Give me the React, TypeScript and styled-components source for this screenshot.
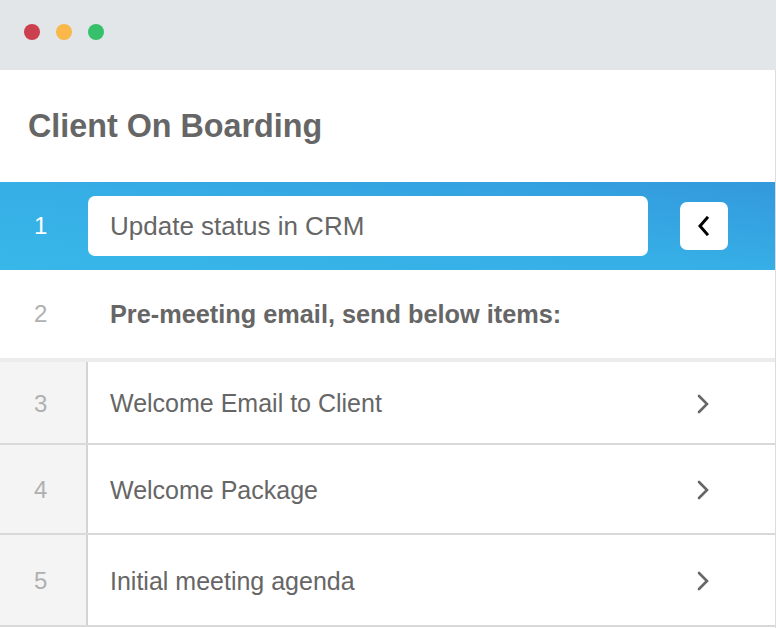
import React from "react";
import styled, { createGlobalStyle } from "styled-components";

const Global = createGlobalStyle`
  html, body { margin: 0; padding: 0; background: #ffffff; }
  body { font-family: "Liberation Sans", Arial, Helvetica, sans-serif; }
  * { box-sizing: border-box; }
`;

const Window = styled.div`
  width: 776px;
  height: 628px;
  overflow: hidden;
  display: flex;
  flex-direction: column;
  background: #ffffff;
`;

const TitleBar = styled.div`
  height: 70px;
  flex: none;
  background: #e3e6e8;
  display: flex;
  align-items: center;
  padding-left: 24px;
  padding-bottom: 6px;
  gap: 16px;
`;

const Dot = styled.span<{ $color: string }>`
  width: 16px;
  height: 16px;
  border-radius: 50%;
  background: ${(p) => p.$color};
`;

const Body = styled.div`
  flex: 1;
  display: flex;
  flex-direction: column;
  border-right: 1px solid #dcdcdc;
`;

const Header = styled.div`
  height: 112px;
  display: flex;
  align-items: center;
  padding-left: 28px;
`;

const Title = styled.h1`
  margin: 0;
  font-size: 32.3px;
  font-weight: 700;
  color: #666666;
`;

const ActiveRow = styled.div`
  height: 88px;
  display: flex;
  align-items: center;
  background: linear-gradient(to right top, #38b7e9 0%, #36aee6 50%, #3399dc 100%);
`;

const Num = styled.div<{ $light?: boolean }>`
  width: 88px;
  flex: none;
  padding-left: 34px;
  font-size: 24px;
  color: ${(p) => (p.$light ? "#ffffff" : "#b0b0b0")};
`;

const InputBox = styled.div`
  width: 560px;
  height: 60px;
  border-radius: 7px;
  background: #ffffff;
  display: flex;
  align-items: center;
  padding-left: 22px;
  font-size: 26px;
  color: #666666;
`;

const IconButton = styled.button`
  width: 48px;
  height: 48px;
  margin-left: 32px;
  border: none;
  border-radius: 7px;
  background: #ffffff;
  display: flex;
  align-items: center;
  justify-content: center;
  padding: 0;
`;

const SectionRow = styled.div`
  height: 88px;
  display: flex;
  align-items: center;
`;

const SectionText = styled.div`
  padding-left: 22px;
  font-size: 25.3px;
  font-weight: 700;
  color: #666666;
`;

const List = styled.div`
  border-top: 4px solid #ececec;
  display: flex;
  flex-direction: column;
`;

const ItemRow = styled.div<{ $h: number }>`
  height: ${(p) => p.$h}px;
  display: grid;
  grid-template-columns: 88px 1fr 90px;
  border-bottom: 2px solid #d9d9d9;
`;

const ItemNum = styled.div`
  background: #f4f4f4;
  border-right: 2px solid #d4d4d4;
  display: flex;
  align-items: center;
  padding-left: 34px;
  padding-top: 2px;
  font-size: 24px;
  color: #b0b0b0;
`;

const ItemText = styled.div`
  display: flex;
  align-items: center;
  padding-left: 22px;
  padding-top: 2px;
  font-size: 25px;
  color: #666666;
`;

const ItemChevron = styled.div`
  display: flex;
  align-items: center;
  padding-left: 11px;
  padding-top: 2px;
`;

const ChevronLeft = () => (
  <svg width="14" height="20" viewBox="0 0 14 20">
    <polyline points="10,2 3,10 10,18" fill="none" stroke="#000" strokeWidth="3" strokeLinecap="square" strokeLinejoin="miter" />
  </svg>
);

const ChevronRight = () => (
  <svg width="14" height="20" viewBox="0 0 14 20">
    <polyline points="3,2 11,10 3,18" fill="none" stroke="#666" strokeWidth="2.6" strokeLinecap="round" strokeLinejoin="miter" />
  </svg>
);

const items = [
  { n: 3, t: "Welcome Email to Client", h: 83 },
  { n: 4, t: "Welcome Package", h: 90 },
  { n: 5, t: "Initial meeting agenda", h: 92 },
];

export default function App() {
  return (
    <>
      <Global />
      <Window>
        <TitleBar>
          <Dot $color="#cc3f4f" />
          <Dot $color="#f8b84a" />
          <Dot $color="#37c06b" />
        </TitleBar>
        <Body>
          <Header>
            <Title>Client On Boarding</Title>
          </Header>
          <ActiveRow>
            <Num $light>1</Num>
            <InputBox>Update status in CRM</InputBox>
            <IconButton aria-label="collapse">
              <ChevronLeft />
            </IconButton>
          </ActiveRow>
          <SectionRow>
            <Num>2</Num>
            <SectionText>Pre-meeting email, send below items:</SectionText>
          </SectionRow>
          <List>
            {items.map((it) => (
              <ItemRow key={it.n} $h={it.h}>
                <ItemNum>{it.n}</ItemNum>
                <ItemText>{it.t}</ItemText>
                <ItemChevron>
                  <ChevronRight />
                </ItemChevron>
              </ItemRow>
            ))}
          </List>
        </Body>
      </Window>
    </>
  );
}
